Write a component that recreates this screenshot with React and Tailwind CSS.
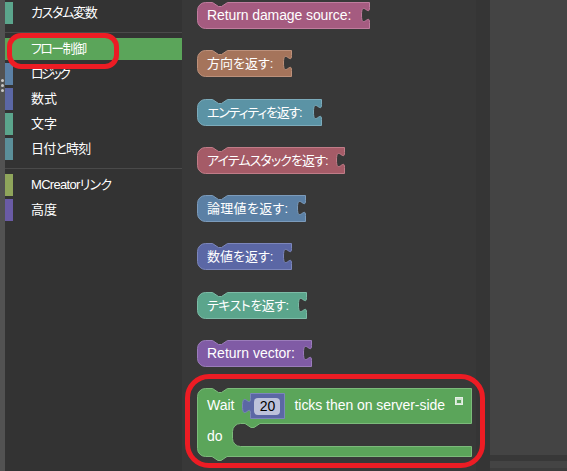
const font = { fontFamily: '"Liberation Sans", "Noto Sans CJK JP", sans-serif' };

const categories = [
  { label: 'カスタム変数', color: 'bg-[#5ba58c]', track: 'tracking-[-1.3px]' },
  { divider: true },
  { label: 'フロー制御', color: 'bg-[#5ba55a]', active: true, track: 'tracking-[-1.6px]' },
  { label: 'ロジック', color: 'bg-[#5b80a5]', track: 'tracking-[-2.5px]' },
  { label: '数式', color: 'bg-[#5b67a5]', track: '' },
  { label: '文字', color: 'bg-[#5ba58c]', track: '' },
  { label: '日付と時刻', color: 'bg-[#5b8f99]', track: 'tracking-[-0.8px]' },
  { divider: true },
  { label: 'MCreatorリンク', color: 'bg-[#8fa55b]', track: 'tracking-[-0.7px]' },
  { label: '高度', color: 'bg-[#6a5ba5]', track: '' },
];

const blocks = [
  { label: 'Return damage source:', w: 173, fill: '#a55b80', edge: '#c07c9e', text: 'text-[14px] tracking-[-0.1px]' },
  { label: '方向を返す:', w: 95, fill: '#a5745b', edge: '#bd917b', text: 'text-[13px]' },
  { label: 'エンティティを返す:', w: 125, fill: '#5b93a5', edge: '#7cabbb', text: 'text-[13px] tracking-[-1.2px]' },
  { label: 'アイテムスタックを返す:', w: 148, fill: '#a55b67', edge: '#c07c88', text: 'text-[13px] tracking-[-0.9px]' },
  { label: '論理値を返す:', w: 109, fill: '#5b80a5', edge: '#7c9bbb', text: 'text-[13px] tracking-[0.3px]' },
  { label: '数値を返す:', w: 95, fill: '#5b67a5', edge: '#7c86bb', text: 'text-[13px]' },
  { label: 'テキストを返す:', w: 110, fill: '#5ba58c', edge: '#7cbba6', text: 'text-[13px] tracking-[-0.5px]' },
  { label: 'Return vector:', w: 115, fill: '#805ba5', edge: '#9b7cbb', text: 'text-[14px]' },
];

// Blockly のハット形 (上に切り欠き、右にパズルの穴)
function HatBlock({ label, w, fill, edge, text }) {
  const d = `M0.5,8.5 a8,8 0 0 1 8,-8 h7 l6,4 h3 l6,-4 H${w - 0.5} V5.5 c0,10 -8,-8 -8,7.5 s8,-2.5 8,7.5 V26.5 H8.5 a8,8 0 0 1 -8,-8 z`;
  return (
    <div className="grid h-[27px]" style={{ width: w }}>
      <svg className="col-start-1 row-start-1" width={w} height="27">
        <path d={d} fill={fill} stroke={edge} />
      </svg>
      <div className={`col-start-1 row-start-1 pl-[10px] h-[27px] leading-[27px] text-white whitespace-nowrap [font-feature-settings:'palt'] ${text}`}>{label}</div>
    </div>
  );
}

function WaitBlock() {
  return (
    <div className="grid w-[275px] h-[76px]">
      <svg className="col-start-1 row-start-1" width="275" height="76">
        <path d="M0.5,8.5 a8,8 0 0 1 8,-8 h7 l6,4 h3 l6,-4 H274.5 V35.5 H63 l-6,4 h-3 l-6,-4 H43.5 a8,8 0 0 0 -8,8 V50.5 a8,8 0 0 0 8,8 H274.5 V68.5 H30 l-6,4 h-3 l-6,-4 H8.5 a8,8 0 0 1 -8,-8 z" fill="#5ba55a" stroke="#7cbb7b" />
      </svg>
      <div className="col-start-1 row-start-1 pl-[10px] text-[14px] text-white">
        <div className="flex items-center h-[35px]">
          <span>Wait</span>
          <div className="grid w-[43px] h-[26px] ml-[8px] mt-[1px]">
            <svg className="col-start-1 row-start-1" width="43" height="26">
              <path d="M8.5,0.5 H42.5 V25.5 H8.5 V20.5 c0,-10 -8,8 -8,-7.5 s8,2.5 8,-7.5 z" fill="#5b67a5" stroke="#7c86bb" />
            </svg>
            <div className="col-start-1 row-start-1 self-center ml-[12px] w-[26px] h-[17px] rounded-[4px] bg-[#bdc2db] text-black text-center leading-[17px]">20</div>
          </div>
          <span className="ml-[9px] tracking-[-0.05px]">ticks then on server-side</span>
          <div className="ml-[10px] -mt-[10px] w-[8px] h-[8px] bg-[#cfe3cf] border border-[#e6f0e6]">
            <div className="w-[4px] h-[3px] mx-auto mt-[2px] bg-[#5ba55a]"></div>
          </div>
        </div>
        <div className="h-[24px] leading-[24px] mt-[1px]">do</div>
      </div>
    </div>
  );
}

export default function App() {
  return (
    <div className="relative flex h-[471px] w-[567px] overflow-hidden bg-[#444444]" style={font}>
      {/* 左端のスプリッタ */}
      <div className="flex w-[5px] shrink-0 flex-col items-center gap-[2px] bg-[#525252] pt-[79px]">
        <div className="h-[3px] w-[3px] rounded-full bg-[#c8c8c8]"></div>
        <div className="h-[3px] w-[3px] rounded-full bg-[#c8c8c8]"></div>
        <div className="h-[3px] w-[3px] rounded-full bg-[#c8c8c8]"></div>
      </div>

      {/* カテゴリ一覧 */}
      <div className="flex w-[177px] shrink-0 flex-col bg-[#333333] pt-[2px]">
        {categories.map((c, i) =>
          c.divider ? (
            <div key={i} className="mt-[4px] mb-[5px] h-[2px] border-b border-[#4a4a4a]"></div>
          ) : (
            <div key={c.label} className={`mb-[3px] flex h-[22px] items-center text-[13px] text-white [font-feature-settings:'palt'] ${c.active ? 'bg-[#5ba55a]' : ''}`}>
              <div className={`h-[22px] w-[8px] ${c.color}`}></div>
              <span className={`ml-[18px] whitespace-nowrap ${c.track}`}>{c.label}</span>
            </div>
          )
        )}
      </div>

      {/* ブロック一覧 */}
      <div className="flex w-[294px] shrink-0 flex-col gap-[21.3px] bg-[#383838] pl-[15px] pt-[2px]">
        {blocks.map((b) => (
          <HatBlock key={b.label} {...b} />
        ))}
        <WaitBlock />
      </div>

      <div className="w-[14px] shrink-0 bg-[#353535]"></div>

      <div className="flex flex-1 flex-col">
        <div className="flex-1"></div>
        <div className="h-[6px] bg-[#383838]"></div>
        <div className="h-[7px]"></div>
        <div className="h-[3px] bg-[#3c3c3c]"></div>
      </div>

      {/* 赤い囲み (注釈) */}
      <div className="absolute left-[7px] top-[33px] h-[36px] w-[112px] rounded-[14px] border-[5px] border-[#ed1c24]"></div>
      <div className="absolute left-[185px] top-[374px] h-[94px] w-[300px] rounded-[24px] border-[5px] border-[#ed1c24]"></div>
    </div>
  );
}
